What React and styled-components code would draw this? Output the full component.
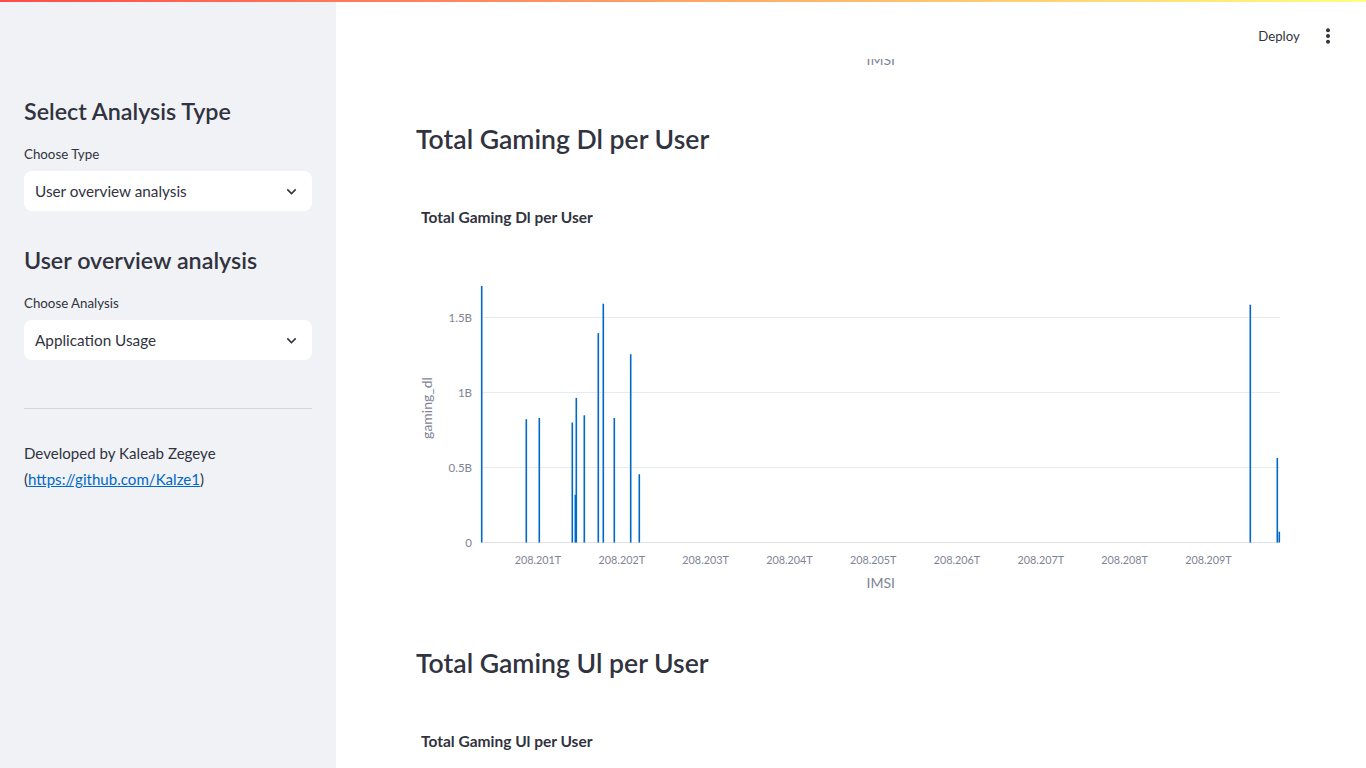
import React from 'react';
import styled, { createGlobalStyle } from 'styled-components';

const GlobalStyle = createGlobalStyle`
  html, body {
    margin: 0;
    padding: 0;
    overflow: hidden;
  }
  body {
    font-family: Lato, "Noto Sans", sans-serif;
    color: #31333f;
    background: #ffffff;
  }
  * {
    box-sizing: border-box;
  }
`;

const Shell = styled.div`
  position: relative;
  display: flex;
  height: 100vh;
  overflow: hidden;
`;

const Decoration = styled.div`
  position: absolute;
  top: 0;
  left: 0;
  right: 0;
  height: 2px;
  background: linear-gradient(90deg, #ff4b4b, #fffd80);
  z-index: 3;
`;

const Sidebar = styled.aside`
  width: 336px;
  flex-shrink: 0;
  background: #f0f2f6;
  padding: 95px 24px 0;
  display: flex;
  flex-direction: column;
`;

const SideTitle = styled.h2`
  margin: ${(p) => (p.$first ? '0' : '33px')} 0 0;
  font-size: 23.3px;
  font-weight: 600;
  line-height: 32px;
  color: #31333f;
`;

const FieldLabel = styled.label`
  margin-top: ${(p) => p.$gap}px;
  font-size: 13.3px;
  line-height: 20px;
  color: #31333f;
`;

const SelectBox = styled.div`
  margin-top: 7px;
  height: 40px;
  background: #ffffff;
  border-radius: 8px;
  padding: 0 11px;
  display: flex;
  align-items: center;
  justify-content: space-between;
  font-size: 15.3px;
  color: #31333f;
`;

const Divider = styled.hr`
  margin: 48px 0 0;
  border: none;
  border-top: 1px solid #d3d5db;
`;

const Credit = styled.p`
  margin: 31px 0 0;
  font-size: 15.1px;
  line-height: 26px;
  color: #31333f;
`;

const CreditLink = styled.a`
  color: #0068c9;
  text-decoration: underline;
`;

const Main = styled.main`
  position: relative;
  flex: 1;
  overflow: hidden;
`;

const Header = styled.header`
  position: absolute;
  top: 0;
  left: 0;
  right: 0;
  height: 59px;
  background: #ffffff;
  z-index: 2;
  display: flex;
  justify-content: flex-end;
  align-items: flex-start;
  padding: 20px 22px 0 0;
`;

const DeployButton = styled.button`
  width: 66px;
  height: 32px;
  border: none;
  background: transparent;
  font-family: Lato, "Noto Sans", sans-serif;
  font-size: 13.2px;
  color: #31333f;
  padding: 0;
`;

const MenuButton = styled.button`
  width: 32px;
  height: 32px;
  border: none;
  background: transparent;
  display: flex;
  align-items: center;
  justify-content: center;
  padding: 0;
`;

const Content = styled.div`
  padding: 0 80px;
  display: flex;
  flex-direction: column;
`;

const ChartTail = styled.div`
  height: 76px;
  display: flex;
  align-items: flex-end;
`;

const AxisCaption = styled.div`
  margin: 0 0 6.5px 65.5px;
  width: 798.5px;
  text-align: center;
  font-size: 14px;
  line-height: 20px;
  color: #808495;
`;

const SectionTitle = styled.h2`
  margin: 43px 0 0;
  font-size: 26.6px;
  font-weight: 600;
  line-height: 40px;
  color: #31333f;
`;

const ChartSvg = styled.svg`
  display: block;
  margin-top: 31px;
  flex-shrink: 0;
  font-family: Lato, "Noto Sans", sans-serif;
`;

const Chevron = () => (
  <svg width="19" height="19" viewBox="0 0 24 24">
    <path d="M16.59 8.59L12 13.17 7.41 8.59 6 10l6 6 6-6z" fill="#31333f" />
  </svg>
);

const Kebab = () => (
  <svg width="20" height="20" viewBox="0 0 20 20">
    <circle cx="10" cy="4.3" r="2" fill="#31333f" />
    <circle cx="10" cy="10" r="2" fill="#31333f" />
    <circle cx="10" cy="15.7" r="2" fill="#31333f" />
  </svg>
);

const PLOT = { left: 65.5, right: 864, top: 96, base: 352.5, perB: 150 };
const Y_TICKS = [
  { v: 0, label: '0' },
  { v: 0.5, label: '0.5B' },
  { v: 1, label: '1B' },
  { v: 1.5, label: '1.5B' },
];
const X_TICKS = ['201', '202', '203', '204', '205', '206', '207', '208', '209'];

// bar x position (px inside the chart) and value in billions
const DL_BARS = [
  [65.7, 1.75], [110.3, 0.822], [123.3, 0.83], [156.3, 0.8], [159.3, 0.318],
  [160.3, 0.964], [168.3, 0.848], [182.3, 1.396], [187.3, 1.592], [198.3, 0.83],
  [214.7, 1.255], [223.3, 0.455], [834.3, 1.585], [861.3, 0.563], [863.3, 0.072],
];

const UL_BARS = [
  [65.7, 1.1], [110.3, 0.6], [160.3, 0.9], [187.3, 1.2], [214.7, 0.7], [834.3, 1.3],
];

function BarChart({ title, yTitle, bars }) {
  const yOf = (v) => Math.max(PLOT.top, PLOT.base - v * PLOT.perB);
  return (
    <ChartSvg width="870" height="410" viewBox="0 0 870 410">
      <text x="5" y="33.3" fontSize="15.5" fontWeight="700" fill="#31333f">
        {title}
      </text>
      {Y_TICKS.map((t) => (
        <g key={t.label}>
          <line
            x1={PLOT.left}
            x2={PLOT.right}
            y1={PLOT.base - t.v * PLOT.perB}
            y2={PLOT.base - t.v * PLOT.perB}
            stroke={t.v === 0 ? '#dfe2e8' : '#e6eaf1'}
            strokeWidth="1"
          />
          <text
            x="56"
            y={PLOT.base - t.v * PLOT.perB + 4}
            fontSize="11.5"
            textAnchor="end"
            fill="#808495"
          >
            {t.label}
          </text>
        </g>
      ))}
      <text
        transform="translate(15.5 218) rotate(-90)"
        fontSize="14"
        textAnchor="middle"
        fill="#808495"
      >
        {yTitle}
      </text>
      {bars.map(([x, v], i) => (
        <rect
          key={i}
          x={x - 0.8}
          width="1.6"
          y={yOf(v)}
          height={PLOT.base - yOf(v)}
          fill="#0068c9"
        />
      ))}
      {X_TICKS.map((t, i) => (
        <text
          key={t}
          x={122 + i * 83.8}
          y="374"
          fontSize="10.8"
          textAnchor="middle"
          fill="#808495"
        >
          {`208.${t}T`}
        </text>
      ))}
      <text x="464.75" y="398" fontSize="14" textAnchor="middle" fill="#808495">
        IMSI
      </text>
    </ChartSvg>
  );
}

export default function App() {
  return (
    <>
      <GlobalStyle />
      <Shell>
        <Decoration />
        <Sidebar>
          <SideTitle $first>Select Analysis Type</SideTitle>
          <FieldLabel $gap={17}>Choose Type</FieldLabel>
          <SelectBox>
            <span>User overview analysis</span>
            <Chevron />
          </SelectBox>
          <SideTitle>User overview analysis</SideTitle>
          <FieldLabel $gap={17}>Choose Analysis</FieldLabel>
          <SelectBox>
            <span>Application Usage</span>
            <Chevron />
          </SelectBox>
          <Divider />
          <Credit>
            Developed by Kaleab Zegeye
            <br />(<CreditLink href="#">https://github.com/Kalze1</CreditLink>)
          </Credit>
        </Sidebar>
        <Main>
          <Header>
            <DeployButton>Deploy</DeployButton>
            <MenuButton>
              <Kebab />
            </MenuButton>
          </Header>
          <Content>
            <ChartTail>
              <AxisCaption>IMSI</AxisCaption>
            </ChartTail>
            <SectionTitle>Total Gaming Dl per User</SectionTitle>
            <BarChart title="Total Gaming Dl per User" yTitle="gaming_dl" bars={DL_BARS} />
            <SectionTitle>Total Gaming Ul per User</SectionTitle>
            <BarChart title="Total Gaming Ul per User" yTitle="gaming_ul" bars={UL_BARS} />
          </Content>
        </Main>
      </Shell>
    </>
  );
}
